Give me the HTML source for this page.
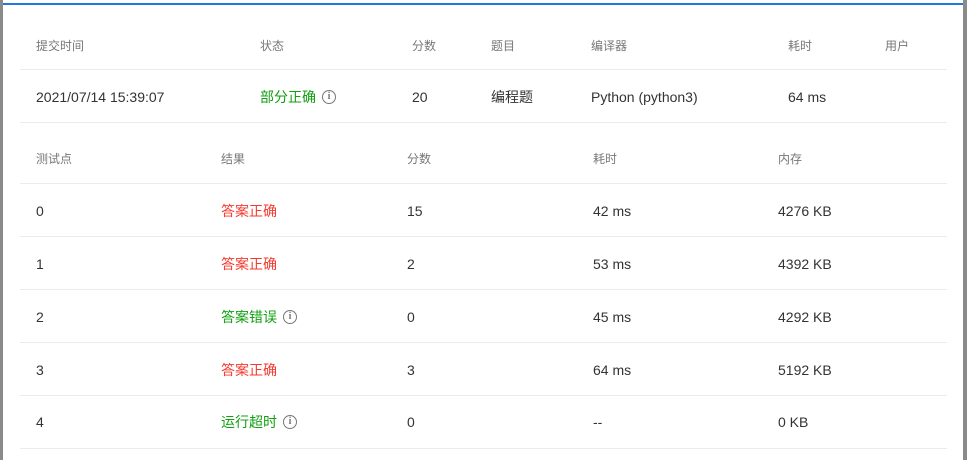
<!DOCTYPE html>
<html><head><meta charset="utf-8"><style>
body{margin:0;width:967px;height:460px;background:#fff;position:relative;overflow:hidden;font-family:"Liberation Sans","Noto Sans CJK SC",sans-serif;}
.t{position:absolute;white-space:nowrap;line-height:16px;}
.h{font-size:12px;color:#777;}
.d{font-size:14px;color:#333;}
.g{color:#10a010;}
.r{color:#f43a2e;}
.ln{position:absolute;left:20px;width:927px;height:1px;background:#ebebeb;}
.i{display:inline-block;width:12px;height:12px;border:1.4px solid #777;border-radius:50%;color:#777;font-size:10px;line-height:12px;text-align:center;font-weight:bold;vertical-align:3px;margin-left:6px;font-family:"Liberation Serif",serif;}
</style></head><body>
<div style="position:absolute;left:0;top:0;width:3px;height:460px;background:#8a8a8a"></div>
<div style="position:absolute;right:0;top:0;width:4px;height:460px;background:#8a8a8a"></div>
<div style="position:absolute;left:3px;top:3px;width:960px;height:2px;background:#1e7ae0"></div>

<div class="t h" style="left:36px;top:38px">提交时间</div>
<div class="t h" style="left:260px;top:38px">状态</div>
<div class="t h" style="left:412px;top:38px">分数</div>
<div class="t h" style="left:491px;top:38px">题目</div>
<div class="t h" style="left:591px;top:38px">编译器</div>
<div class="t h" style="left:788px;top:38px">耗时</div>
<div class="t h" style="left:885px;top:38px">用户</div>
<div class="ln" style="top:69px"></div>
<div class="t d" style="left:36px;top:89px">2021/07/14 15:39:07</div>
<div class="t d g" style="left:260px;top:89px">部分正确<span class="i">i</span></div>
<div class="t d" style="left:412px;top:89px">20</div>
<div class="t d" style="left:491px;top:89px">编程题</div>
<div class="t d" style="left:591px;top:89px">Python (python3)</div>
<div class="t d" style="left:788px;top:89px">64 ms</div>
<div class="ln" style="top:122px"></div>

<div class="t h" style="left:36px;top:151px">测试点</div>
<div class="t h" style="left:221px;top:151px">结果</div>
<div class="t h" style="left:407px;top:151px">分数</div>
<div class="t h" style="left:593px;top:151px">耗时</div>
<div class="t h" style="left:778px;top:151px">内存</div>
<div class="ln" style="top:183px"></div>

<div class="t d" style="left:36px;top:203px">0</div>
<div class="t d r" style="left:221px;top:203px">答案正确</div>
<div class="t d" style="left:407px;top:203px">15</div>
<div class="t d" style="left:593px;top:203px">42 ms</div>
<div class="t d" style="left:778px;top:203px">4276 KB</div>
<div class="ln" style="top:236px"></div>

<div class="t d" style="left:36px;top:256px">1</div>
<div class="t d r" style="left:221px;top:256px">答案正确</div>
<div class="t d" style="left:407px;top:256px">2</div>
<div class="t d" style="left:593px;top:256px">53 ms</div>
<div class="t d" style="left:778px;top:256px">4392 KB</div>
<div class="ln" style="top:289px"></div>

<div class="t d" style="left:36px;top:309px">2</div>
<div class="t d g" style="left:221px;top:309px">答案错误<span class="i">i</span></div>
<div class="t d" style="left:407px;top:309px">0</div>
<div class="t d" style="left:593px;top:309px">45 ms</div>
<div class="t d" style="left:778px;top:309px">4292 KB</div>
<div class="ln" style="top:342px"></div>

<div class="t d" style="left:36px;top:362px">3</div>
<div class="t d r" style="left:221px;top:362px">答案正确</div>
<div class="t d" style="left:407px;top:362px">3</div>
<div class="t d" style="left:593px;top:362px">64 ms</div>
<div class="t d" style="left:778px;top:362px">5192 KB</div>
<div class="ln" style="top:395px"></div>

<div class="t d" style="left:36px;top:414px">4</div>
<div class="t d g" style="left:221px;top:414px">运行超时<span class="i">i</span></div>
<div class="t d" style="left:407px;top:414px">0</div>
<div class="t d" style="left:593px;top:414px">--</div>
<div class="t d" style="left:778px;top:414px">0 KB</div>
<div class="ln" style="top:448px"></div>
</body></html>
